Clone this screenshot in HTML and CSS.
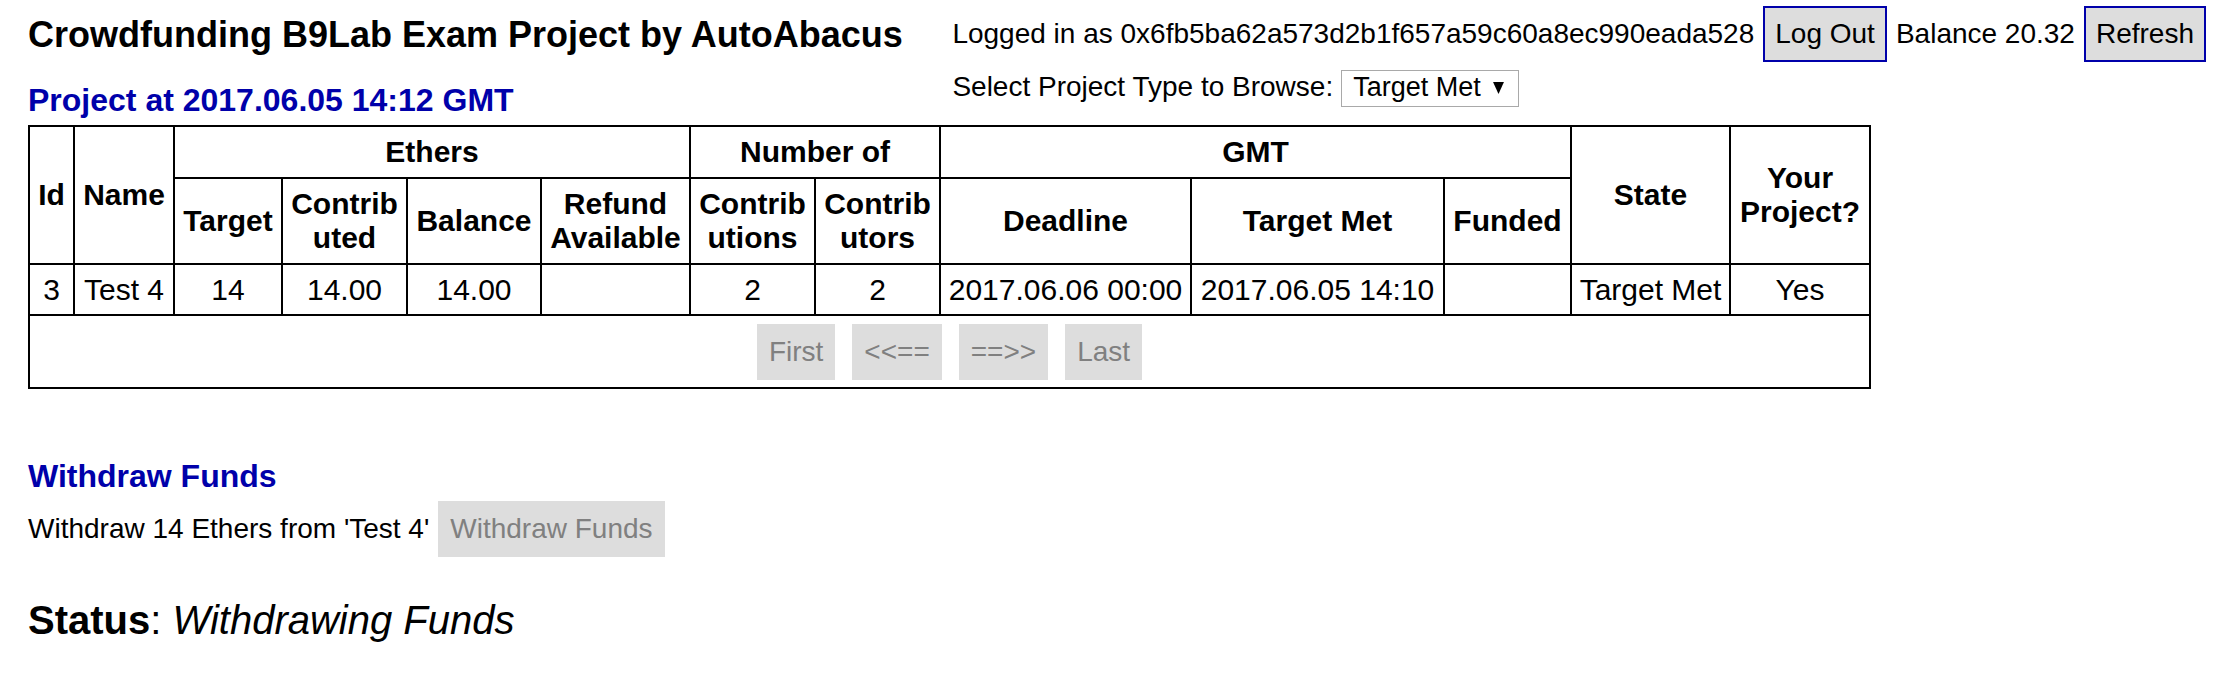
FILE: index.html
```html
<!DOCTYPE html>
<html lang="en">
<head>
<meta charset="utf-8">
<title>Crowdfunding B9Lab Exam Project</title>
<link rel="stylesheet" href="styles.css">
</head>
<body>
<header class="top">
  <div class="top-left">
    <h1 class="app-title">Crowdfunding B9Lab Exam Project by AutoAbacus</h1>
    <h2 class="section-title project-title">Project at 2017.06.05 14:12 GMT</h2>
  </div>
  <div class="account">
    <div class="account-row">
      <span>Logged in as 0x6fb5ba62a573d2b1f657a59c60a8ec990eada528</span>
      <button class="btn btn-active" type="button">Log Out</button>
      <span>Balance 20.32</span>
      <button class="btn btn-active" type="button">Refresh</button>
    </div>
    <div class="account-row browse-row">
      <span>Select Project Type to Browse:</span>
      <div class="select-box">
        <span>Target Met</span>
        <svg class="select-arrow" viewBox="0 0 10 11" aria-hidden="true"><polygon points="0,0 10,0 5,11" fill="#000"/></svg>
      </div>
    </div>
  </div>
</header>

<table class="projects">
  <colgroup>
    <col class="c-id"><col class="c-name"><col class="c-target"><col class="c-contributed"><col class="c-balance"><col class="c-refund"><col class="c-contributions"><col class="c-contributors"><col class="c-deadline"><col class="c-targetmet"><col class="c-funded"><col class="c-state"><col class="c-yours">
  </colgroup>
  <thead>
    <tr class="head-1">
      <th rowspan="2">Id</th>
      <th rowspan="2">Name</th>
      <th colspan="4">Ethers</th>
      <th colspan="2">Number of</th>
      <th colspan="3">GMT</th>
      <th rowspan="2">State</th>
      <th rowspan="2">Your<br>Project?</th>
    </tr>
    <tr class="head-2">
      <th>Target</th>
      <th>Contrib<br>uted</th>
      <th>Balance</th>
      <th>Refund<br>Available</th>
      <th>Contrib<br>utions</th>
      <th>Contrib<br>utors</th>
      <th>Deadline</th>
      <th>Target Met</th>
      <th>Funded</th>
    </tr>
  </thead>
  <tbody>
    <tr class="data-row">
      <td>3</td>
      <td>Test 4</td>
      <td>14</td>
      <td>14.00</td>
      <td>14.00</td>
      <td></td>
      <td>2</td>
      <td>2</td>
      <td>2017.06.06 00:00</td>
      <td>2017.06.05 14:10</td>
      <td></td>
      <td>Target Met</td>
      <td>Yes</td>
    </tr>
    <tr class="pager-row">
      <td colspan="13">
        <div class="pager">
          <button class="btn" type="button" disabled>First</button>
          <button class="btn" type="button" disabled>&lt;&lt;==</button>
          <button class="btn" type="button" disabled>==&gt;&gt;</button>
          <button class="btn" type="button" disabled>Last</button>
        </div>
      </td>
    </tr>
  </tbody>
</table>

<section class="withdraw">
  <h2 class="section-title">Withdraw Funds</h2>
  <div class="withdraw-row">
    <span>Withdraw 14 Ethers from 'Test 4'</span>
    <button class="btn" type="button" disabled>Withdraw Funds</button>
  </div>
</section>

<p class="status"><b>Status</b>: <em>Withdrawing Funds</em></p>
</body>
</html>
```

FILE: styles.css
```css
* {
  box-sizing: border-box;
}

html,
body {
  margin: 0;
}

body {
  font-family: "Liberation Sans", Arial, sans-serif;
  font-size: 28px;
  line-height: normal;
  color: #000;
  background: #fff;
  padding: 0 21px 40px 28px;
}

.top {
  display: flex;
  justify-content: space-between;
  align-items: flex-start;
}

.app-title {
  margin: 14px 0 0;
  font-size: 36px;
  font-weight: bold;
  line-height: normal;
}

.section-title {
  margin: 0;
  font-size: 32px;
  font-weight: bold;
  line-height: normal;
  color: #0000aa;
}

.project-title {
  margin-top: 26px;
}

.account {
  padding-top: 6px;
}

.account-row {
  display: flex;
  align-items: baseline;
  gap: 9px;
  white-space: nowrap;
}

.browse-row {
  margin-top: 8px;
  gap: 8px;
}

.btn {
  font-family: inherit;
  font-size: 28px;
  line-height: normal;
  margin: 0;
  padding: 10px;
  border: 2px solid #dddddd;
  border-radius: 0;
  background: #dddddd;
  color: #808080;
}

.btn-active {
  border-color: #0000aa;
  color: #000;
}

.select-box {
  display: inline-flex;
  align-items: center;
  gap: 12px;
  border: 1px solid #a9a9a9;
  padding: 1px 14px 3px 11px;
  font-size: 27px;
  background: #fff;
}

.select-arrow {
  width: 11px;
  height: 12px;
  flex: none;
}

/* table */
.projects {
  border-collapse: collapse;
  table-layout: fixed;
  width: 1841px;
  margin-top: 6px;
}

.projects th,
.projects td {
  border: 2px solid #000;
  padding: 7px 6px;
  text-align: center;
  vertical-align: middle;
  font-size: 30px;
  line-height: normal;
}

.projects th {
  font-weight: bold;
}

.head-1 { height: 52px; }
.head-2 { height: 86px; }
.data-row { height: 51px; }
.pager-row { height: 73px; }

.c-id { width: 45px; }
.c-name { width: 100px; }
.c-target { width: 108px; }
.c-contributed { width: 125px; }
.c-balance { width: 134px; }
.c-refund { width: 149px; }
.c-contributions { width: 125px; }
.c-contributors { width: 125px; }
.c-deadline { width: 251px; }
.c-targetmet { width: 253px; }
.c-funded { width: 127px; }
.c-state { width: 159px; }
.c-yours { width: 140px; }

.pager {
  display: flex;
  justify-content: center;
  gap: 17px;
}

/* withdraw */
.withdraw {
  margin-top: 69px;
}

.withdraw-row {
  display: flex;
  align-items: baseline;
  gap: 9px;
  margin-top: 6px;
}

.status {
  margin: 41px 0 0;
  font-size: 40px;
  line-height: normal;
}

.status b {
  font-weight: bold;
}

.status em {
  font-style: italic;
}
```
